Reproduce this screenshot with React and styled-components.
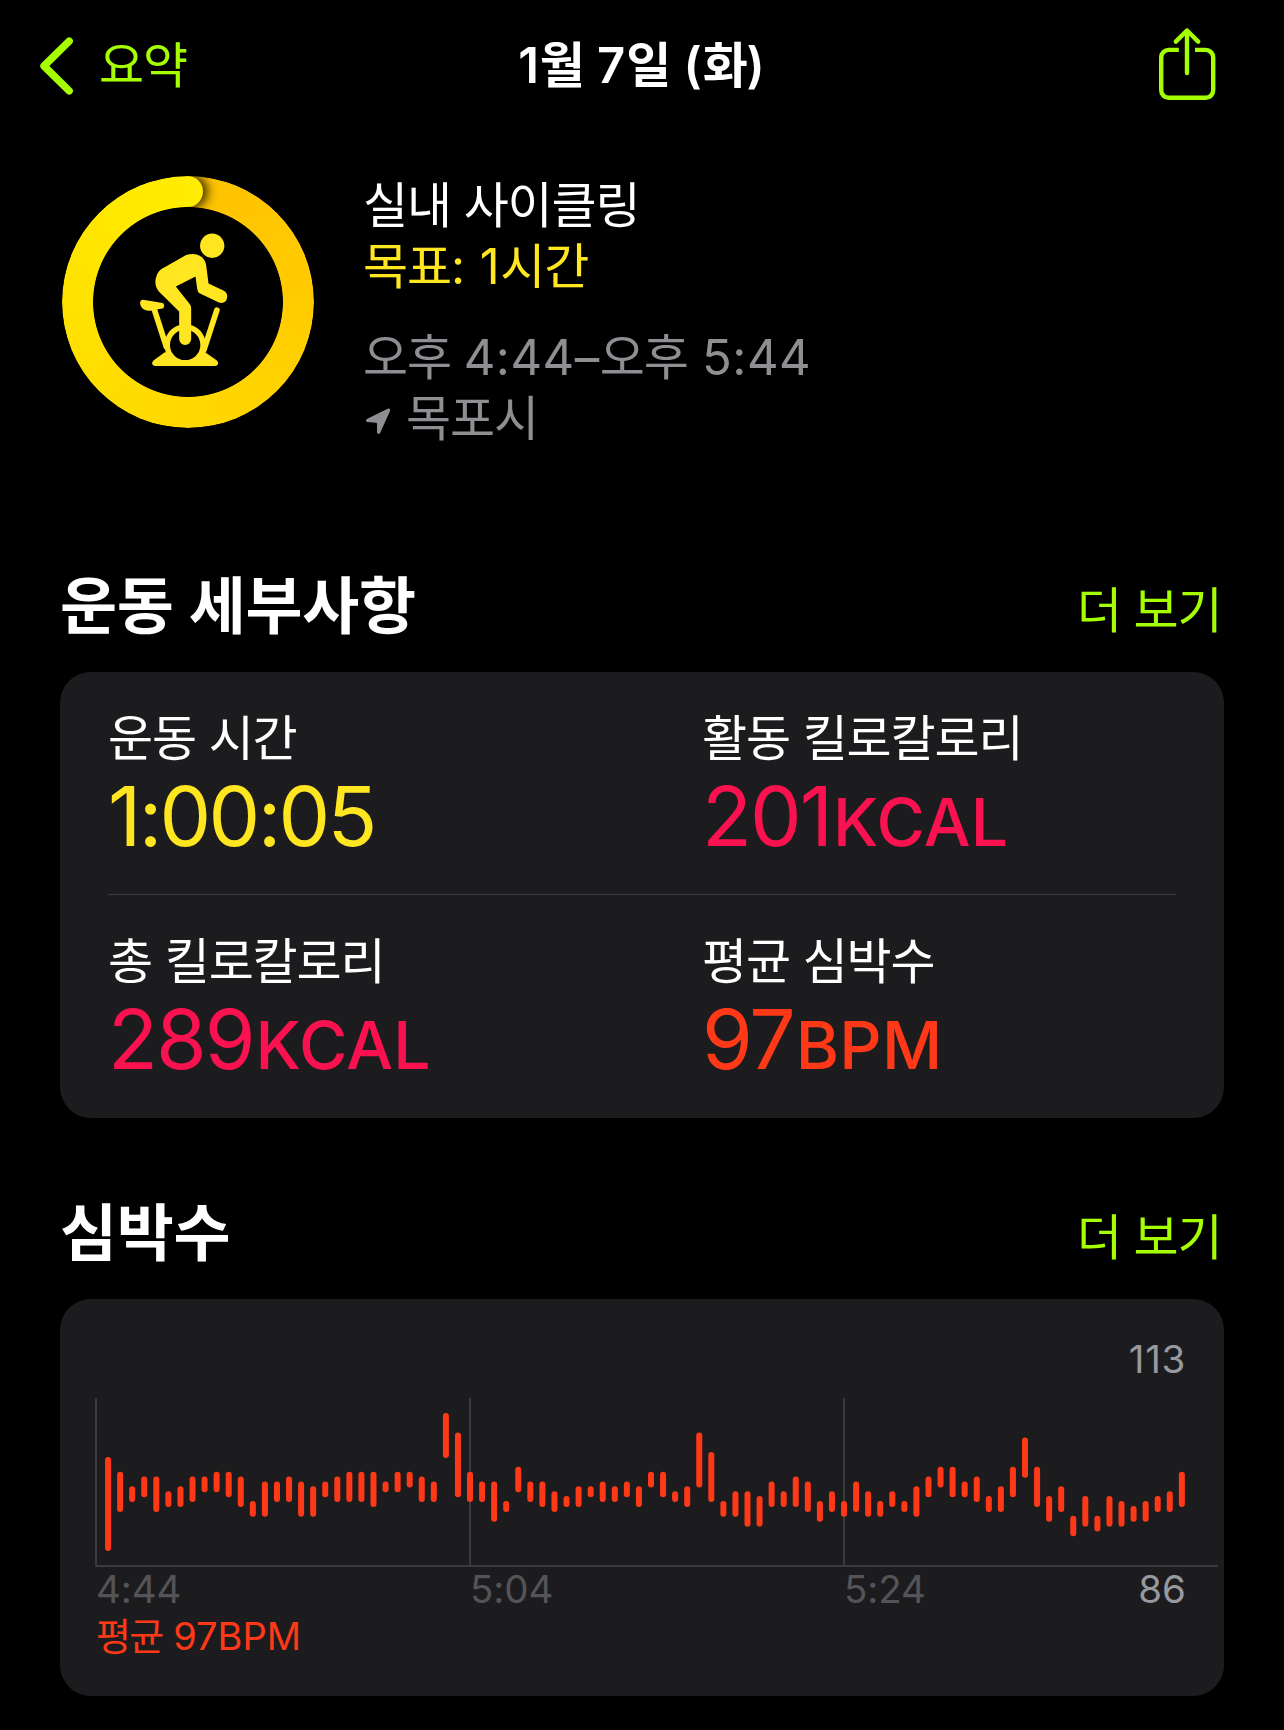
import React from 'react'
import styled, { createGlobalStyle } from 'styled-components'

const GlobalStyle = createGlobalStyle`
  :root {
    --green: #a6ff00;
    --yellow: #ffe620;
    --pink: #fa114f;
    --red: #ff3918;
    --gray: #8e8e93;
    --card: #1c1c1e;
    --line: #3a3a3c;
  }

  * {
    box-sizing: border-box;
  }

  body {
    background: #000;
    color: #fff;
    font-family: Inter, 'Noto Sans CJK KR', sans-serif;
    font-size: 49px;
    letter-spacing: -1.1px;
    line-height: 61px;
    margin: 0;
  }

  h1, h2, p {
    margin: 0;
  }

  button {
    background: none;
    border: 0;
    color: inherit;
    cursor: pointer;
    font: inherit;
    letter-spacing: inherit;
    padding: 0;
  }

  svg {
    display: block;
  }
`

const Screen = styled.main`
  height: 1730px;
  overflow: hidden;
  width: 1284px;
`

// Digits and punctuation sit looser than the Hangul around them
const Latin = styled.span`
  letter-spacing: ${props => props.$spacing || '0.5px'};
  white-space: pre;
`

const Header = styled.header`
  align-items: center;
  display: grid;
  grid-template-columns: 1fr auto 1fr;
  height: 131px;
  padding: 0 40px;
`

const BackButton = styled.button`
  && {
    align-items: center;
    color: var(--green);
    display: flex;
    gap: 25px;
    justify-self: start;
  }
`

const Title = styled.h1`
  font-size: 49px;
  font-weight: 600;
`

const ShareButton = styled.button`
  && {
    align-self: start;
    color: var(--green);
    justify-self: end;
    margin: 27px 27px 0 0;
  }
`

const Hero = styled.section`
  display: flex;
  gap: 49.5px;
  height: 274px;
  margin-top: 44px;
  padding-left: 61.5px;
`

const Ring = styled.div`
  display: grid;
  flex: none;
  height: 252px;
  margin-top: 0.5px;
  width: 252px;

  > * {
    grid-area: 1 / 1;
  }
`

const RingTrack = styled.div`
  background: conic-gradient(#ffc200, #ffcc00 25%, #ffd800 50%, #ffe200 75%, #ffec00);
  border-radius: 50%;
  display: flex;
  justify-content: center;
  mask: radial-gradient(circle, transparent 94.5px, #000 95.3px);
  overflow: hidden;
`

const RingCap = styled.div`
  background: #ffec00;
  border-radius: 50%;
  box-shadow: 3px 0 11px 1px rgba(0, 0, 0, 0.85);
  clip-path: inset(-20px -30px -20px 50%);
  height: 31px;
  width: 31px;
`

const Summary = styled.div`
  display: flex;
  flex-direction: column;
`

const SummaryLine = styled.p`
  color: ${props => props.$color || '#fff'};
  margin-top: ${props => (props.$spaced ? 30 : 0)}px;
`

const Place = styled(SummaryLine)`
  align-items: center;
  display: flex;
  gap: 14.5px;

  svg {
    margin: 4px 0 0 1.5px;
  }
`

const Section = styled.section`
  margin-top: ${props => props.$top}px;
  padding: 0 60px;
`

const SectionHead = styled.div`
  align-items: flex-end;
  display: flex;
  height: 76px;
  justify-content: space-between;
  margin-bottom: 26px;
`

const SectionTitle = styled.h2`
  font-size: 62px;
  font-weight: 600;
  letter-spacing: -0.3px;
  line-height: 76px;
  padding-bottom: 1px;
`

const MoreButton = styled.button`
  && {
    color: var(--green);
    padding: 0 2.5px 5px 0;
  }
`

const Card = styled.div`
  background: var(--card);
  border-radius: 31px;
`

const StatsCard = styled(Card)`
  height: 446px;
  padding: 0 48px;
`

const StatRow = styled.div`
  display: grid;
  grid-template-columns: 594px 1fr;
  height: 222px;
  padding-top: 36px;

  & + & {
    border-top: 1px solid var(--line);
    height: 223px;
  }
`

const StatValue = styled.p`
  color: ${props => props.$color};
  font-size: 82px;
  letter-spacing: ${props => props.$spacing || '-2px'};
  line-height: 95px;
`

const StatUnit = styled.span`
  font-size: 66px;
  font-weight: 500;
  letter-spacing: 0.3px;
  margin-left: 2px;
`

const ChartCard = styled(Card)`
  font-size: 38.5px;
  height: 397px;
  letter-spacing: -0.1px;
  line-height: 47px;
  padding: 37px 38px 0 36px;
`

const ChartLimit = styled.p`
  color: #98989f;
  letter-spacing: ${props => props.$spacing || '0'};
  text-align: right;
`

const ChartPlot = styled.svg`
  margin: 15px 0 -1px -1px;
  overflow: visible;
`

const ChartAxis = styled.div`
  color: #545458;
  display: grid;
  grid-template-columns: 374px 374px 1fr auto;
`

const ChartAverage = styled.p`
  color: var(--red);
  font-size: 38px;
  letter-spacing: -1.7px;
`

// [lowest, highest] bpm of each sample
const samples = [
  [86, 104], [94, 101], [96, 98], [97, 100], [94, 100], [95, 97],
  [95, 98], [96, 100], [98, 100], [98, 101], [97, 101], [95, 100],
  [93, 95], [93, 99], [96, 99], [96, 100], [93, 99], [93, 98],
  [97, 99], [96, 100], [96, 101], [96, 101], [95, 101], [98, 99],
  [98, 101], [99, 101], [96, 100], [96, 99], [105, 113], [97, 109],
  [96, 101], [96, 99], [92, 99], [94, 95], [98, 102], [96, 99],
  [95, 99], [94, 97], [95, 96], [95, 98], [97, 98], [96, 99],
  [96, 98], [97, 99], [95, 98], [99, 101], [97, 101], [96, 97],
  [95, 98], [99, 109], [96, 105], [93, 95], [93, 97], [91, 97],
  [91, 96], [95, 99], [95, 97], [95, 100], [94, 99], [92, 95],
  [94, 97], [93, 95], [94, 99], [93, 97], [93, 95], [95, 97],
  [94, 95], [93, 98], [97, 100], [99, 102], [97, 102], [97, 99],
  [96, 100], [94, 96], [94, 98], [97, 102], [101, 108], [95, 102],
  [92, 96], [94, 98], [89, 92], [91, 96], [90, 92], [91, 96],
  [91, 95], [92, 94], [92, 95], [94, 96], [94, 97], [95, 101]
]

const MAX_BPM = 113
const MIN_BPM = 86
const BPM_STEP = 4.889
const SAMPLE_STEP = 12.065

const bpmToY = bpm => 18 + (MAX_BPM - bpm) * BPM_STEP

const stats = [
  [
    { label: '운동 시간', value: '1:00:05', color: 'var(--yellow)', spacing: '-2.7px' },
    { label: '활동 킬로칼로리', value: '201', unit: 'KCAL', color: 'var(--pink)' }
  ],
  [
    { label: '총 킬로칼로리', value: '289', unit: 'KCAL', color: 'var(--pink)' },
    { label: '평균 심박수', value: '97', unit: 'BPM', color: 'var(--red)' }
  ]
]

const ChevronIcon = () => (
  <svg width="34" height="58" viewBox="0 0 34 58" fill="none">
    <path
      d="M29.2 4.2 4 29l25.2 24.8"
      stroke="currentColor"
      strokeWidth="7.4"
      strokeLinecap="round"
      strokeLinejoin="round"
    />
  </svg>
)

const ShareIcon = () => (
  <svg width="58" height="74" viewBox="0 0 58 74" fill="none">
    <g stroke="currentColor" strokeWidth="4.4">
      <path d="M19.8 22.9H9.7a7.5 7.5 0 0 0-7.5 7.5v32.9a7.5 7.5 0 0 0 7.5 7.5h37a7.5 7.5 0 0 0 7.5-7.5V30.4a7.5 7.5 0 0 0-7.5-7.5H36" />
      <path
        d="M28 46V3.5M16.8 14.6 28 3.5l11.2 11.1"
        strokeLinecap="round"
        strokeLinejoin="round"
      />
    </g>
  </svg>
)

const CyclingIcon = () => (
  <svg width="252" height="252" viewBox="66 76 755 755" fill="#ffe620">
    <circle cx="516" cy="285" r="36.5" />
    <path d="M309 447 363 456a9 9 0 0 1 0 18C350 475 342 480 326 480c-16 0-26-12-26-24a8 9 0 0 1 9-9z" />
    <g stroke="#ffe620" strokeWidth="17">
      <path d="M342 474 380 592" />
      <path d="M530 478 491 598" strokeLinecap="round" />
    </g>
    <circle cx="435" cy="582" r="62" />
    <path d="M374 604 342 627C332 634 336 645 346 645H524C534 645 538 634 528 627L495 604Z" />
    <circle cx="435" cy="582" r="45.5" fill="#000" />
    <path d="M438 313C468 302 495 318 498 344L505 398 551 420C563 427 563 440 558 448 553 456 545 458 536 455L478 427Q472 424 471 414L466 377 407 407 449 460Q453 465 453 472V564a18 18 0 0 1-36 0V482L357 423C345 410 343 390 349 376 354 360 365 353 372 350Z" />
  </svg>
)

const LocationIcon = () => (
  <svg width="27" height="28" viewBox="74 738 81 84" fill="currentColor">
    <path d="M142 743 81 773Q73 778 80 783L107 785Q110 785 110 788V814Q112 822 119 817L149 750Q151 740 142 743Z" />
  </svg>
)

const HeartRatePlot = () => (
  <ChartPlot width="1123" height="169" viewBox="0 0 1123 169">
    <g stroke="#3a3a3c" strokeWidth="2">
      <path d="M1 0V168M375 0V168M749 0V168M0 168H1123" />
    </g>
    <g stroke="#ff3918" strokeWidth="6" strokeLinecap="round">
      {samples.map(([low, high], index) => {
        const x = 1 + (index + 1) * SAMPLE_STEP
        return <line key={index} x1={x} x2={x} y1={bpmToY(high)} y2={bpmToY(low)} />
      })}
    </g>
  </ChartPlot>
)

const SectionHeader = ({ title }) => (
  <SectionHead>
    <SectionTitle>{title}</SectionTitle>
    <MoreButton>더 보기</MoreButton>
  </SectionHead>
)

const Stat = ({ label, value, unit, color, spacing }) => (
  <div>
    <p>{label}</p>
    <StatValue $color={color} $spacing={spacing}>
      {value}
      {unit && <StatUnit>{unit}</StatUnit>}
    </StatValue>
  </div>
)

const App = () => (
  <Screen>
    <GlobalStyle />
    <Header>
      <BackButton>
        <ChevronIcon />
        요약
      </BackButton>
      <Title>
        <Latin $spacing="0.9px">1</Latin>월<Latin $spacing="0.9px"> 7</Latin>일
        <Latin $spacing="0.9px"> (</Latin>화<Latin $spacing="0.9px">)</Latin>
      </Title>
      <ShareButton aria-label="공유">
        <ShareIcon />
      </ShareButton>
    </Header>

    <Hero>
      <Ring>
        <RingTrack>
          <RingCap />
        </RingTrack>
        <CyclingIcon />
      </Ring>
      <Summary>
        <SummaryLine>실내 사이클링</SummaryLine>
        <SummaryLine $color="var(--yellow)">
          목표<Latin>: 1</Latin>시간
        </SummaryLine>
        <SummaryLine $color="var(--gray)" $spaced>
          오후 <Latin>4:44–</Latin>오후<Latin> 5:44</Latin>
        </SummaryLine>
        <Place $color="var(--gray)">
          <LocationIcon />
          목포시
        </Place>
      </Summary>
    </Hero>

    <Section $top={121}>
      <SectionHeader title="운동 세부사항" />
      <StatsCard>
        {stats.map((row, index) => (
          <StatRow key={index}>
            {row.map(stat => (
              <Stat key={stat.label} {...stat} />
            ))}
          </StatRow>
        ))}
      </StatsCard>
    </Section>

    <Section $top={79}>
      <SectionHeader title="심박수" />
      <ChartCard>
        <ChartLimit $spacing="0.7px">{MAX_BPM}</ChartLimit>
        <HeartRatePlot />
        <ChartAxis>
          <span>4:44</span>
          <span>5:04</span>
          <span>5:24</span>
          <ChartLimit>{MIN_BPM}</ChartLimit>
        </ChartAxis>
        <ChartAverage>
          평균<Latin $spacing="0"> 97BPM</Latin>
        </ChartAverage>
      </ChartCard>
    </Section>
  </Screen>
)

export default App
